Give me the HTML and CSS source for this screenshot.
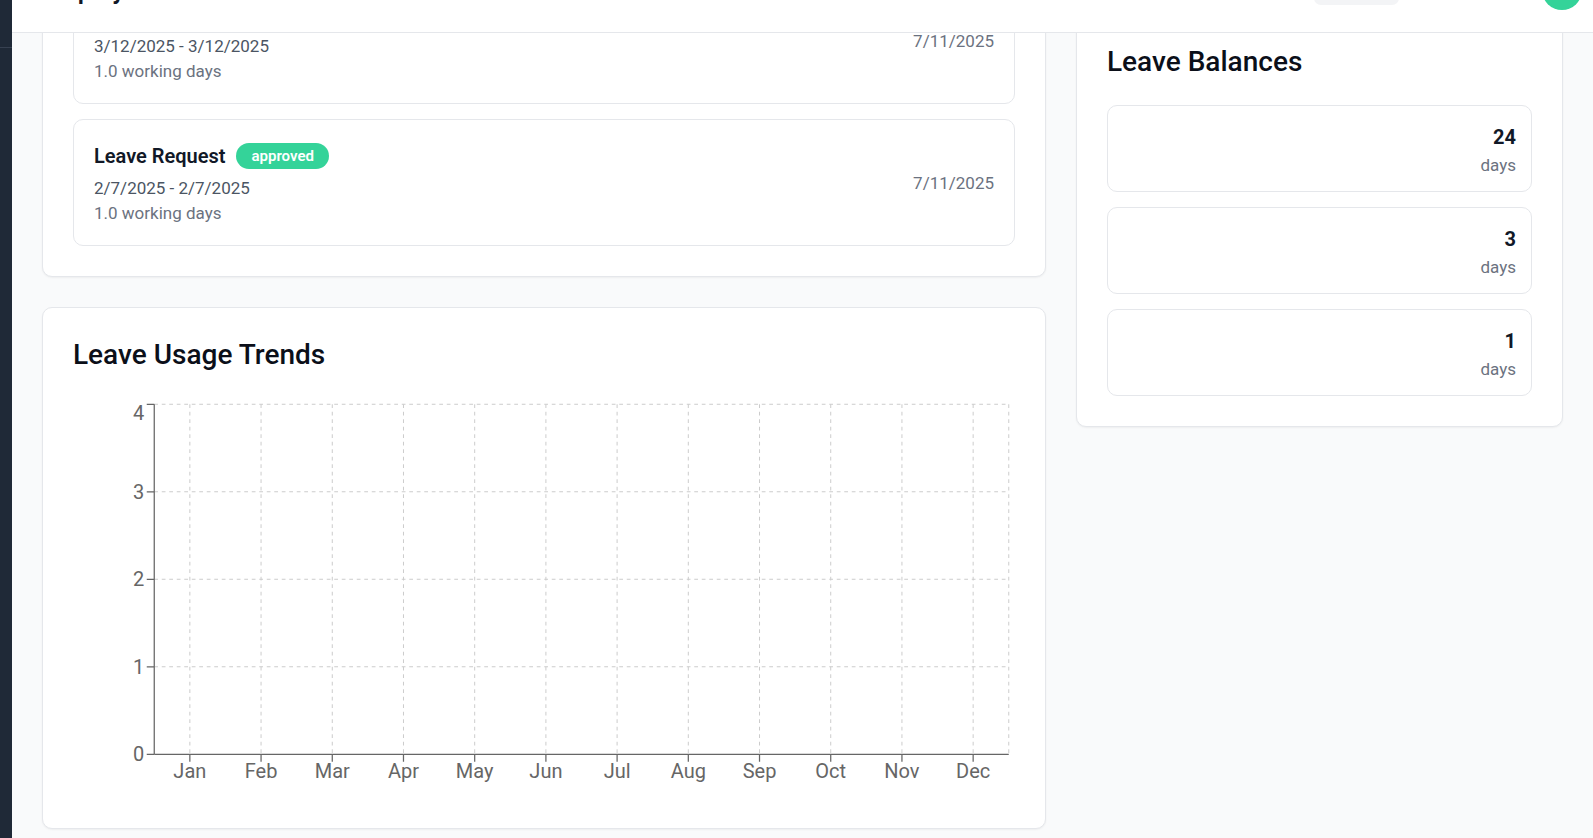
FILE: index.html
```html
<!DOCTYPE html>
<html lang="en">
<head>
<meta charset="utf-8">
<title>Employee Dashboard</title>
<link rel="stylesheet" href="styles.css">
</head>
<body>
<div class="app">
  <aside class="sidebar"><div class="sidebar-brand"></div></aside>
  <div class="shell">
    <header class="topbar">
      <div class="topbar-row">
        <h1 class="page-title">Employee Dashboard</h1>
        <div class="topbar-right">
          <span class="help-link">Help</span>
          <span class="role-pill">Employee</span>
          <div class="user">
            <span class="user-name">Priya</span>
            <span class="avatar">P</span>
          </div>
        </div>
      </div>
    </header>
    <main class="main">
      <div class="grid">
        <div class="col-main">
          <section class="card">
            <h2 class="card-title">Recent Leave Requests</h2>
            <div class="stack">
              <div class="request">
                <div class="request-info">
                  <div class="request-head">
                    <span class="request-title">Leave Request</span>
                    <span class="badge">approved</span>
                  </div>
                  <div class="request-dates">3/12/2025 - 3/12/2025</div>
                  <div class="request-days">1.0 working days</div>
                </div>
                <div class="request-created">7/11/2025</div>
              </div>
              <div class="request">
                <div class="request-info">
                  <div class="request-head">
                    <span class="request-title">Leave Request</span>
                    <span class="badge">approved</span>
                  </div>
                  <div class="request-dates">2/7/2025 - 2/7/2025</div>
                  <div class="request-days">1.0 working days</div>
                </div>
                <div class="request-created">7/11/2025</div>
              </div>
            </div>
          </section>
          <section class="card">
            <h2 class="card-title">Leave Usage Trends</h2>
            <svg class="chart" width="942" height="400">
              <path class="grid-lines" d="M81.25 6.25H935.75M81.25 93.75H935.75M81.25 181.25H935.75M81.25 268.75H935.75M116.85 6.25V356.25M188.06 6.25V356.25M259.27 6.25V356.25M330.48 6.25V356.25M401.69 6.25V356.25M472.9 6.25V356.25M544.1 6.25V356.25M615.31 6.25V356.25M686.52 6.25V356.25M757.73 6.25V356.25M828.94 6.25V356.25M900.15 6.25V356.25M935.75 6.25V356.25"/>
              <path class="axis" d="M81.25 6.25V356.25M73.75 6.25H81.25M73.75 93.75H81.25M73.75 181.25H81.25M73.75 268.75H81.25M73.75 356.25H81.25"/>
              <path class="axis" d="M81.25 356.25H935.75M116.85 356.25V363.75M188.06 356.25V363.75M259.27 356.25V363.75M330.48 356.25V363.75M401.69 356.25V363.75M472.9 356.25V363.75M544.1 356.25V363.75M615.31 356.25V363.75M686.52 356.25V363.75M757.73 356.25V363.75M828.94 356.25V363.75M900.15 356.25V363.75"/>
              <g class="y-labels">
                <text x="71.25" y="22">4</text>
                <text x="71.25" y="100.85">3</text>
                <text x="71.25" y="188.35">2</text>
                <text x="71.25" y="275.85">1</text>
                <text x="71.25" y="363.35">0</text>
              </g>
              <g class="x-labels">
                <text x="116.85" y="380">Jan</text>
                <text x="188.06" y="380">Feb</text>
                <text x="259.27" y="380">Mar</text>
                <text x="330.48" y="380">Apr</text>
                <text x="401.69" y="380">May</text>
                <text x="472.9" y="380">Jun</text>
                <text x="544.1" y="380">Jul</text>
                <text x="615.31" y="380">Aug</text>
                <text x="686.52" y="380">Sep</text>
                <text x="757.73" y="380">Oct</text>
                <text x="828.94" y="380">Nov</text>
                <text x="900.15" y="380">Dec</text>
              </g>
            </svg>
          </section>
        </div>
        <div class="col-side">
          <section class="card">
            <button class="primary-btn" type="button">Request Leave</button>
          </section>
          <section class="card">
            <h2 class="card-title">Leave Balances</h2>
            <div class="stack">
              <div class="balance">
                <div class="balance-type"></div>
                <div class="balance-amount">
                  <div class="balance-value">24</div>
                  <div class="balance-unit">days</div>
                </div>
              </div>
              <div class="balance">
                <div class="balance-type"></div>
                <div class="balance-amount">
                  <div class="balance-value">3</div>
                  <div class="balance-unit">days</div>
                </div>
              </div>
              <div class="balance">
                <div class="balance-type"></div>
                <div class="balance-amount">
                  <div class="balance-value">1</div>
                  <div class="balance-unit">days</div>
                </div>
              </div>
            </div>
          </section>
        </div>
      </div>
    </main>
  </div>
</div>
</body>
</html>
```
FILE: styles.css
```css
* { box-sizing: border-box; }

html, body {
  margin: 0;
  height: 100%;
}

body {
  font-family: "Segoe UI", Roboto, "Noto Sans", sans-serif;
  background: #f9fafb;
  color: #111827;
  overflow: hidden;
}

.app {
  display: flex;
  height: 100vh;
}

.sidebar {
  width: 12px;
  flex-shrink: 0;
  background: #1f2937;
}

.sidebar-brand {
  height: 48px;
  border-bottom: 1px solid #374151;
}

.shell {
  flex: 1;
  min-width: 0;
  display: flex;
  flex-direction: column;
}

/* header: only its lower part is in view */
.topbar {
  height: 33px;
  flex-shrink: 0;
  display: flex;
  align-items: flex-end;
  overflow: hidden;
  background: #fff;
  border-bottom: 1px solid #e5e7eb;
}

.topbar-row {
  flex-shrink: 0;
  width: 100%;
  height: 84px;
  display: flex;
  align-items: center;
  justify-content: space-between;
  padding: 0 11px 0 30px;
}

.page-title {
  margin: 0;
  font-size: 25px;
  line-height: 35px;
  font-weight: 600;
  color: #111827;
}

.topbar-right {
  display: flex;
  align-items: center;
}

.help-link {
  font-size: 17px;
  line-height: 25px;
  color: #6b7280;
}

.role-pill {
  margin-left: 78px;
  width: 85px;
  height: 30px;
  border-radius: 7px;
  background: #f3f4f6;
  color: #374151;
  font-size: 15px;
  line-height: 30px;
  text-align: center;
}

.user {
  margin-left: 89px;
  display: flex;
  align-items: center;
  gap: 15px;
}

.user-name {
  font-size: 17px;
  line-height: 25px;
  font-weight: 500;
  color: #111827;
}

.avatar {
  width: 40px;
  height: 40px;
  border-radius: 50%;
  background: #34d399;
  color: #fff;
  font-size: 17px;
  font-weight: 600;
  display: flex;
  align-items: center;
  justify-content: center;
}

/* scrolled content area */
.main {
  flex: 1;
  min-height: 0;
  display: flex;
  flex-direction: column;
  justify-content: flex-end;
  overflow: hidden;
  padding: 0 30px 9px;
}

.grid {
  flex-shrink: 0;
  display: grid;
  grid-template-columns: repeat(3, minmax(0, 1fr));
  gap: 30px;
  align-items: start;
}

.col-main {
  grid-column: span 2;
  display: flex;
  flex-direction: column;
  gap: 30px;
}

.col-side {
  display: flex;
  flex-direction: column;
  gap: 30px;
}

.card {
  background: #fff;
  border: 1px solid #e5e7eb;
  border-radius: 10px;
  padding: 30px;
  box-shadow: 0 1px 2px rgba(0, 0, 0, 0.05);
}

.card-title {
  margin: 0 0 26px;
  font-size: 28px;
  line-height: 34px;
  font-weight: 500;
  color: #0b0f19;
}

.stack {
  display: flex;
  flex-direction: column;
  gap: 15px;
}

.request {
  display: flex;
  align-items: center;
  justify-content: space-between;
  border: 1px solid #e5e7eb;
  border-radius: 10px;
  padding: 21px 20px 19px;
}

.request-head {
  display: flex;
  align-items: center;
  gap: 11px;
  height: 30px;
}

.request-title {
  font-size: 20px;
  line-height: 30px;
  font-weight: 600;
  color: #111827;
}

.badge {
  font-size: 15px;
  line-height: 20px;
  padding: 3px 15px;
  border-radius: 999px;
  background: #34d399;
  color: #fff;
  font-weight: 600;
}

.request-dates {
  margin-top: 5px;
  font-size: 17px;
  line-height: 25px;
  color: #4b5563;
}

.request-days {
  font-size: 17px;
  line-height: 25px;
  color: #6b7280;
}

.request-created {
  font-size: 17px;
  line-height: 25px;
  color: #6b7280;
}

.primary-btn {
  display: block;
  width: 100%;
  border: 0;
  border-radius: 8px;
  padding: 6px 15px;
  background: #10b981;
  color: #fff;
  font: inherit;
  font-size: 17px;
  line-height: 24px;
  font-weight: 600;
}

.balance {
  display: flex;
  align-items: center;
  justify-content: space-between;
  border: 1px solid #e5e7eb;
  border-radius: 10px;
  padding: 16px 15px 13px;
}

.balance-amount {
  text-align: right;
}

.balance-value {
  font-size: 20px;
  line-height: 30px;
  font-weight: 700;
  color: #111827;
}

.balance-unit {
  margin-top: 1px;
  font-size: 17px;
  line-height: 25px;
  color: #6b7280;
}

.chart {
  display: block;
  width: 942px;
  height: 400px;
}

.grid-lines {
  fill: none;
  stroke: #cccccc;
  stroke-width: 1;
  stroke-dasharray: 3.75 3.75;
}

.axis {
  fill: none;
  stroke: #666666;
  stroke-width: 1.25;
}

.chart text {
  font-size: 20px;
  fill: #666666;
}

.y-labels text {
  text-anchor: end;
}

.x-labels text {
  text-anchor: middle;
}
```
